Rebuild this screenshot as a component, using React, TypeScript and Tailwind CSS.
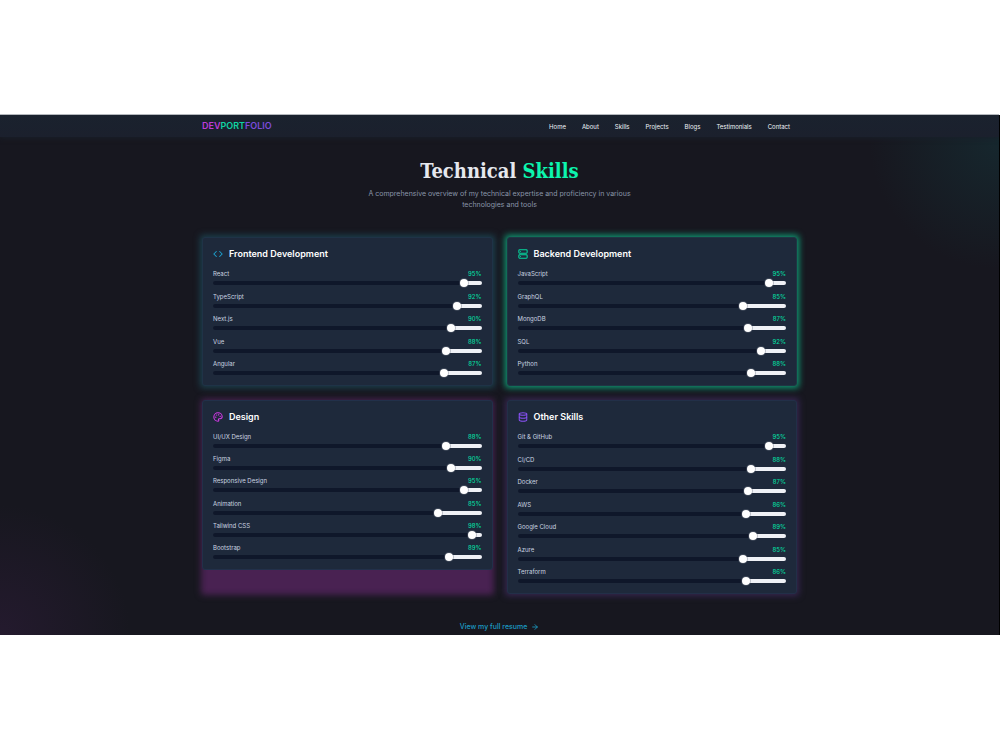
import { useId, useState } from "react";
import { ArrowRight, Code, Database, Palette, Server, type LucideIcon } from "lucide-react";

type Skill = [name: string, level: number];

interface Category {
  title: string;
  icon: LucideIcon;
  iconClass: string;
  glowClass: string;
  cardClass: string;
  skills: Skill[];
}

const navItems = ["Home", "About", "Skills", "Projects", "Blogs", "Testimonials", "Contact"];

const categories: Category[] = [
  {
    title: "Frontend Development",
    icon: Code,
    iconClass: "text-[#1d9fcc]",
    glowClass: "-inset-0.5 bg-[#1b3f4c]",
    cardClass: "min-h-[149px] border-[#1f3347]",
    skills: [["React", 95], ["TypeScript", 92], ["Next.js", 90], ["Vue", 88], ["Angular", 87]],
  },
  {
    title: "Backend Development",
    icon: Server,
    iconClass: "text-[#05d89e]",
    glowClass: "-inset-0.5 bg-[#0f9a74]",
    cardClass: "min-h-[149px] border-[#1f3644]",
    skills: [["JavaScript", 95], ["GraphQL", 85], ["MongoDB", 87], ["SQL", 92], ["Python", 88]],
  },
  {
    title: "Design",
    icon: Palette,
    iconClass: "text-[#d63aea]",
    glowClass: "-inset-px bg-[#492252]",
    cardClass: "min-h-[170px] border-[#22304a]",
    skills: [
      ["UI/UX Design", 88],
      ["Figma", 90],
      ["Responsive Design", 95],
      ["Animation", 85],
      ["Tailwind CSS", 98],
      ["Bootstrap", 89],
    ],
  },
  {
    title: "Other Skills",
    icon: Database,
    iconClass: "text-[#8650f0]",
    glowClass: "-inset-0.5 bg-[#35264f]",
    cardClass: "min-h-[194px] border-[#222f48]",
    skills: [
      ["Git & GitHub", 95],
      ["CI/CD", 88],
      ["Docker", 87],
      ["AWS", 86],
      ["Google Cloud", 89],
      ["Azure", 85],
      ["Terraform", 86],
    ],
  },
];

function SkillRow({ skill: [name, initial] }: { skill: Skill }) {
  const id = useId();
  const [level, setLevel] = useState(initial);
  const stop = `calc(4px + (100% - 8px) * ${level / 100})`;
  return (
    <li className="flex flex-col gap-[3px]">
      <div className="flex justify-between text-[6px] leading-[9px]">
        <label htmlFor={id} className="text-[#cbd5e1]">{name}</label>
        <output htmlFor={id} className="font-medium text-[#05dca0]">{level}%</output>
      </div>
      <input
        id={id}
        type="range"
        min={0}
        max={100}
        value={level}
        onChange={(event) => setLevel(Number(event.target.value))}
        style={{ background: `linear-gradient(to right, #0f172a ${stop}, #eff1f6 ${stop})` }}
        className="block h-1 w-full appearance-none rounded-full [&::-webkit-slider-runnable-track]:h-1 [&::-webkit-slider-thumb]:-mt-0.5 [&::-webkit-slider-thumb]:size-2 [&::-webkit-slider-thumb]:appearance-none [&::-webkit-slider-thumb]:rounded-full [&::-webkit-slider-thumb]:bg-white [&::-webkit-slider-thumb]:shadow-[0_0_0_1px_#6b748266]"
      />
    </li>
  );
}

function SkillCard({ category }: { category: Category }) {
  const Icon = category.icon;
  return (
    <section className="relative">
      <div aria-hidden="true" className={`absolute rounded-[3px] blur-[3px] ${category.glowClass}`} />
      <div className={`relative flex flex-col rounded-[3px] border bg-[#1e293b] p-[10px] ${category.cardClass}`}>
        <div className="flex items-center gap-1.5">
          <Icon className={`size-[10px] ${category.iconClass}`} strokeWidth={2.5} />
          <h2 className="text-[9px] leading-3 font-semibold text-white">{category.title}</h2>
        </div>
        <ul className="mt-[9px] flex flex-1 flex-col justify-between">
          {category.skills.map((skill) => (
            <SkillRow key={skill[0]} skill={skill} />
          ))}
        </ul>
      </div>
    </section>
  );
}

export default function App() {
  return (
    <div className="flex min-h-screen flex-col justify-center bg-white font-['Inter',sans-serif]">
      <div className="mr-px overflow-hidden bg-[#17171f] bg-[radial-gradient(circle_at_100%_24px,#16272e_0,transparent_130px),radial-gradient(circle_at_0_100%,#241a2e_0,transparent_130px)] shadow-[1px_0_0_#000,0_-1px_0_#b4b8bd]">
        <header className="bg-linear-to-b from-[#1a222e] to-[#1b202d] shadow-[0_1px_5px_#19202a]">
          <div className="mx-auto flex h-[22px] max-w-[595px] items-center justify-between pr-[7px]">
            <a href="#home" className="text-[9px] leading-3 font-semibold">
              <span className="text-[#bd3cd8]">DEV</span>
              <span className="text-[#0fd3a2]">PORT</span>
              <span className="text-[#7b4cdc]">FOLIO</span>
            </a>
            <nav className="flex gap-4 text-[6px] leading-[9px] text-[#f1f5f9]">
              {navItems.map((item) => (
                <a key={item} href={`#${item.toLowerCase()}`}>{item}</a>
              ))}
            </nav>
          </div>
        </header>
        <main className="mx-auto flex max-w-[595px] flex-col items-center pt-[22px] pb-[3px]">
          <h1 className="font-['Roboto_Slab','DejaVu_Serif_Condensed','DejaVu_Serif',serif] text-[20px] leading-6 font-bold text-[#e6e8ee]">
            Technical <span className="text-[#0cf5ae]">Skills</span>
          </h1>
          <p className="mt-[5px] max-w-[280px] text-center text-[7px] leading-[11px] text-[#8a96a9]">
            A comprehensive overview of my technical expertise and proficiency in various technologies and tools
          </p>
          <div className="mt-[27px] grid w-full grid-cols-2 gap-[14px]">
            {categories.map((category) => (
              <SkillCard key={category.title} category={category} />
            ))}
          </div>
          <a href="#resume" className="mt-7 flex items-center gap-1 text-[7px] leading-[10px] font-medium text-[#1b9cc4]">
            View my full resume
            <ArrowRight className="size-2" strokeWidth={2.5} />
          </a>
        </main>
      </div>
    </div>
  );
}
